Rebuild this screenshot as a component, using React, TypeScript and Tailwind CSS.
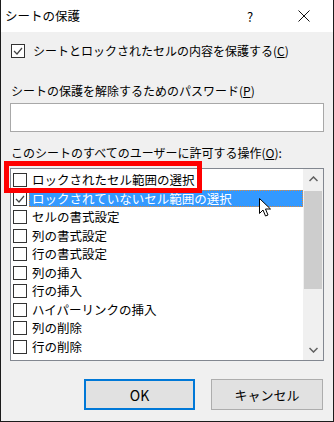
const font = "font-['Noto_Sans_CJK_JP','Noto_Sans',sans-serif]"

const items = [
  'ロックされたセル範囲の選択',
  'ロックされていないセル範囲の選択',
  'セルの書式設定',
  '列の書式設定',
  '行の書式設定',
  '列の挿入',
  '行の挿入',
  'ハイパーリンクの挿入',
  '列の削除',
  '行の削除',
]

function Check({ checked }: { checked?: boolean }) {
  return (
    <span className="w-[14px] h-[14px] shrink-0 border border-[#333] bg-white flex items-center justify-center">
      {checked && (
        <svg width="10" height="8" viewBox="0 0 10 8">
          <path d="M1 4 L4 7 L9 1" fill="none" stroke="#444" strokeWidth="1.2" />
        </svg>
      )}
    </span>
  )
}

function Cursor() {
  return (
    <svg width="13" height="20" viewBox="0 0 13 20" className="absolute left-[258px] top-[198px]">
      <path
        d="M0.5 0.5 L0.5 15.5 L4 12 L6.5 18 L9 17 L6.5 11 L11.5 11 Z"
        fill="#fff"
        stroke="#000"
        strokeWidth="1"
        strokeLinejoin="miter"
      />
    </svg>
  )
}

export default function App() {
  return (
    <div className={`relative w-[334px] h-[422px] bg-[#f0f0f0] border-x border-b border-[#1b1b1b] text-[12px] text-black leading-none ${font}`}>
      {/* title bar */}
      <div className="h-[32px] bg-white flex items-center pl-[4px]">
        <span className="text-[12.5px]">シートの保護</span>
        <span className="ml-auto w-[16px] text-center text-[13px] mr-[40px]">?</span>
        <svg width="12" height="12" viewBox="0 0 12 12" className="mr-[23px]">
          <path d="M0.5 0.5 L11.5 11.5 M11.5 0.5 L0.5 11.5" stroke="#111" strokeWidth="1" />
        </svg>
      </div>

      <div className="px-[9px]">
        <div className="mt-[12px] h-[14px] flex items-center pl-[1px]">
          <Check checked />
          <span className="ml-[8px]">
            シートとロックされたセルの内容を保護する(<span className="underline">C</span>)
          </span>
        </div>

        <div className="mt-[25px] h-[16px] flex items-center pl-[1px]">
          シートの保護を解除するためのパスワード(<span className="underline">P</span>)
        </div>
        <div className="mt-[4px] h-[29px] border border-[#a8a8a8] bg-white" />

        <div className="mt-[13px] h-[16px] flex items-center pl-[1px]">
          このシートのすべてのユーザーに許可する操作(<span className="underline">O</span>):
        </div>

        <div className="mt-[7px] h-[193px] border border-[#828790] bg-white flex text-[12.5px]">
          <div className="flex-1 pt-[2px]">
            {items.map((t, i) => (
              <div key={t} className="h-[18.5px] flex items-center pl-[2px]">
                <Check checked={i === 1} />
                {i === 1 ? (
                  <span className="ml-[2px] flex-1 h-[17px] flex items-center pl-[3px] bg-[#3399ff] text-white outline outline-1 outline-dotted outline-[#e08a3c] -outline-offset-1">
                    {t}
                  </span>
                ) : (
                  <span className="ml-[5px]">{t}</span>
                )}
              </div>
            ))}
          </div>
          <div className="w-[20px] bg-[#f0f0f0] flex flex-col">
            <div className="h-[20px] flex items-center justify-center">
              <svg width="9" height="6" viewBox="0 0 9 6">
                <path d="M0.5 5 L4.5 1 L8.5 5" fill="none" stroke="#606060" strokeWidth="1.5" />
              </svg>
            </div>
            <div className="mx-[1px] mt-[2px] h-[98px] bg-[#cdcdcd]" />
            <div className="mt-auto h-[20px] flex items-center justify-center">
              <svg width="9" height="6" viewBox="0 0 9 6">
                <path d="M0.5 1 L4.5 5 L8.5 1" fill="none" stroke="#606060" strokeWidth="1.5" />
              </svg>
            </div>
          </div>
        </div>

        <div className="mt-[18px] flex justify-end gap-[16px] pr-[1px]">
          <button className="w-[111px] h-[31px] bg-[#e1e1e1] border-2 border-[#0078d7] text-[14px]">OK</button>
          <button className="w-[112px] h-[31px] bg-[#e1e1e1] border border-[#adadad] text-[13px]">キャンセル</button>
        </div>
      </div>

      {/* annotation */}
      <div className="absolute left-[3px] top-[161px] w-[198px] h-[32px] border-[5px] border-[#ff0000]" />
      <Cursor />
    </div>
  )
}
